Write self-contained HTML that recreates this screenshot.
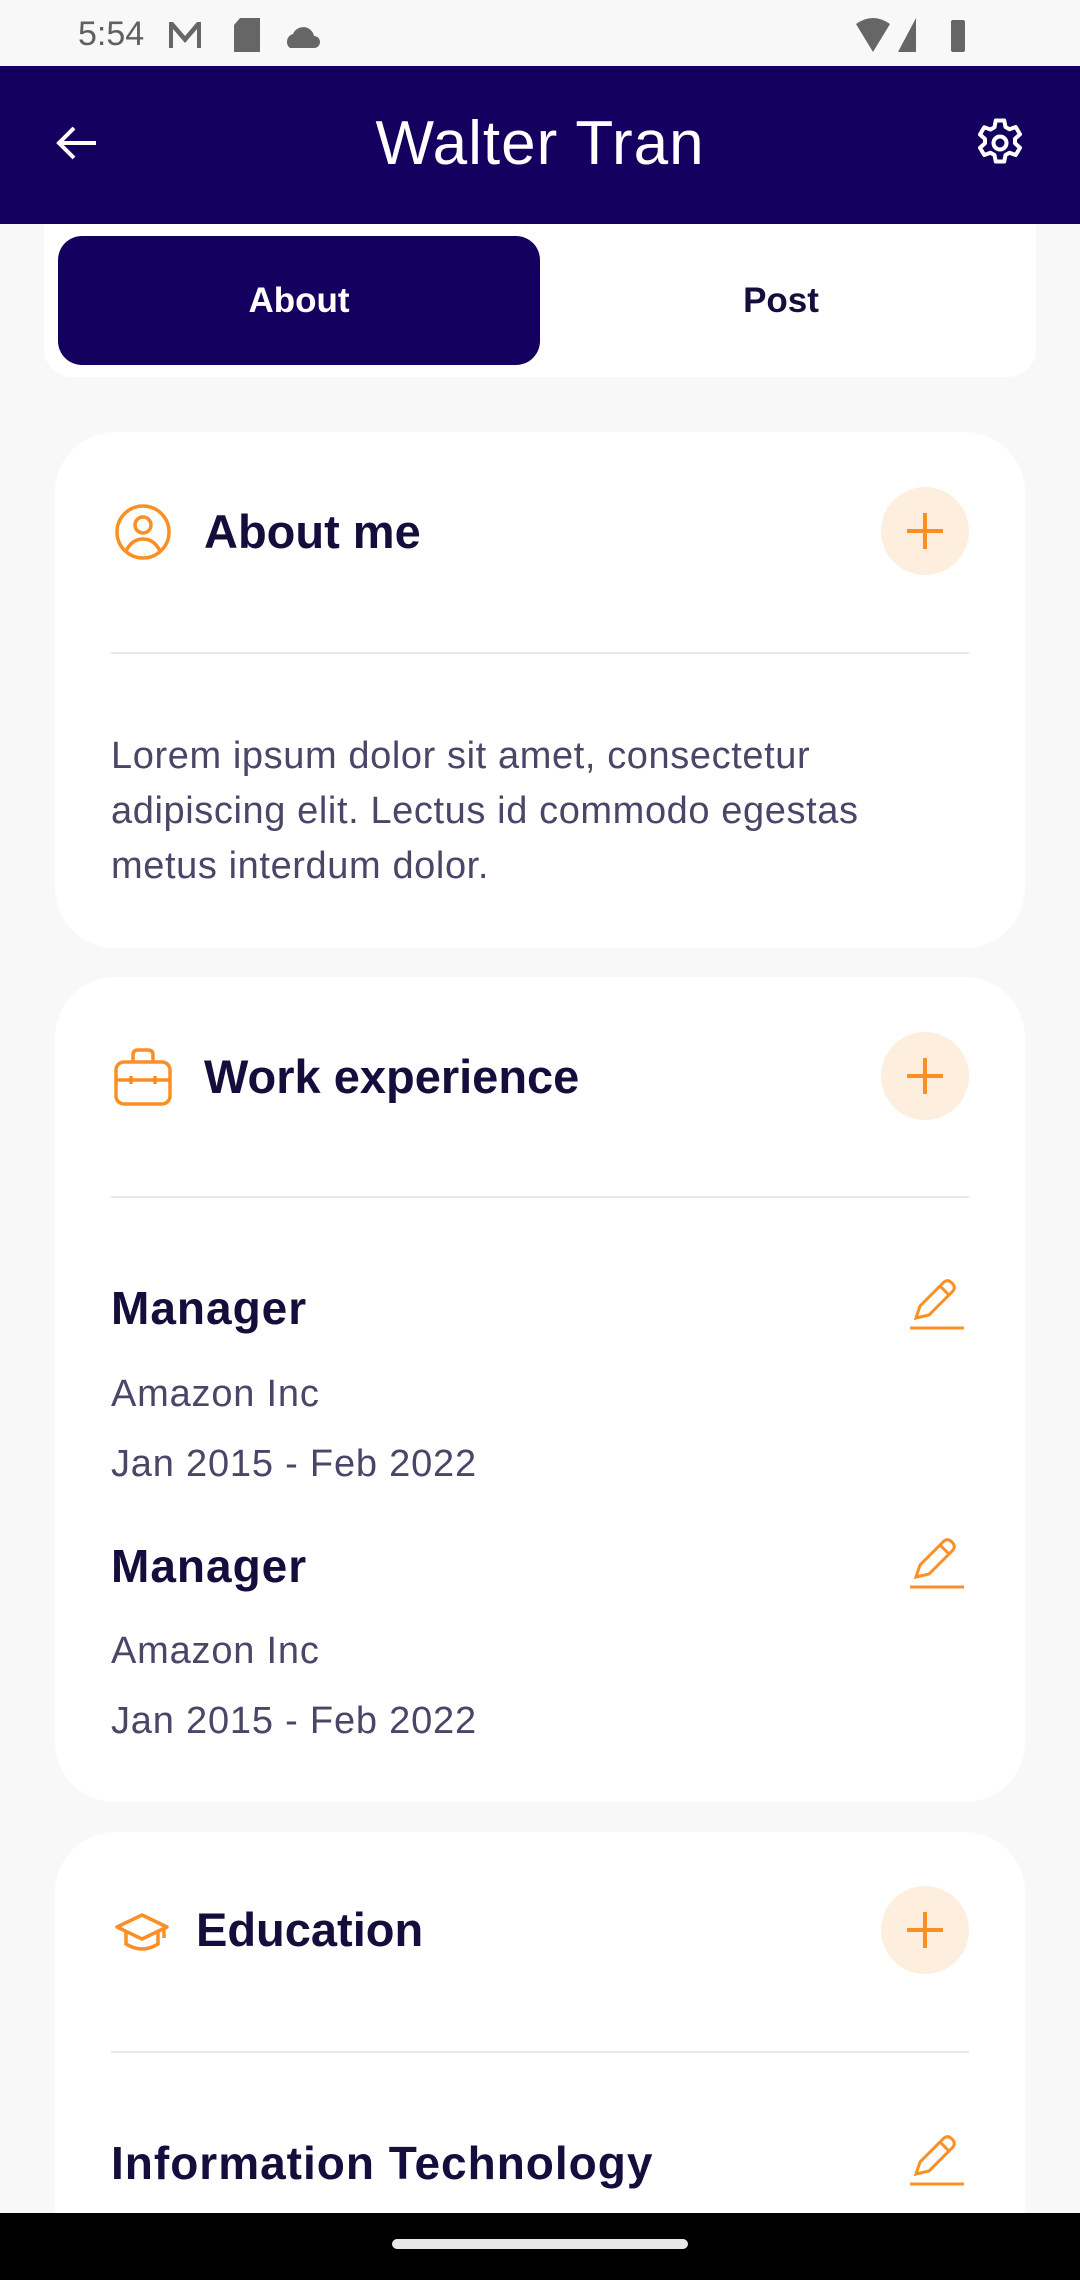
<!DOCTYPE html>
<html style="width:1080px;height:2280px;overflow:hidden"><head><meta charset="utf-8"><style>
*{margin:0;padding:0;box-sizing:border-box}
body{width:1080px;height:2280px;background:#f8f8f8;position:relative;overflow:hidden;font-family:"Liberation Sans",sans-serif}
#w{position:absolute;left:0;top:0;width:1080px;height:2280px;overflow:hidden}
.abs{position:absolute}
.card{position:absolute;left:55px;width:970px;background:#fff;border-radius:60px}
.ttl{position:absolute;font-weight:bold;color:#150e3d;font-size:47px;line-height:52px}
.plus{position:absolute;width:88px;height:88px;border-radius:50%;background:#feeedd}
.div{position:absolute;left:111px;width:858px;height:2px;background:#e8e8ef}
.t{position:absolute;left:111px;color:#4a4668;font-size:38px;line-height:44px;white-space:nowrap;letter-spacing:0.8px}
.m{position:absolute;left:111px;color:#150e3d;font-size:46px;font-weight:bold;line-height:50px;letter-spacing:1px}
</style></head><body><div id="w">
<!-- status bar -->
<div class="abs" style="left:78px;top:14px;font-size:34px;color:#606060;line-height:40px">5:54</div>
<svg class="abs" style="left:165px;top:18px" width="40" height="34" viewBox="0 0 40 34"><path d="M4 30V4h4l12 14L32 4h4v26h-4V11L20 25 8 11v19z" fill="#666"/></svg>
<svg class="abs" style="left:232px;top:16px" width="30" height="38"><path d="M8 2h20v34H2V9z" fill="#666"/></svg>
<svg class="abs" style="left:280px;top:22px" width="40" height="28"><path d="M10 26h24a6 6 0 0 0 0-12 11 11 0 0 0-21-2 8 8 0 0 0-3 14z" fill="#666"/></svg>
<svg class="abs" style="left:854px;top:16px" width="115" height="38"><path d="M2 8q17-12 34 0L19 36z" fill="#666"/><path d="M62 2v34H44z" fill="#666"/><rect x="97" y="4" width="14" height="32" rx="2" fill="#666"/></svg>
<!-- app bar -->
<div class="abs" style="left:0;top:66px;width:1080px;height:158px;background:#13005f"></div>
<svg class="abs" style="left:52px;top:118px" width="50" height="50" viewBox="0 0 50 50"><path d="M44 25H8M22 10 7 25l15 15" stroke="#fff" stroke-width="4" fill="none"/></svg>
<div class="abs" style="left:0;top:106px;width:1080px;text-align:center;color:#fff;font-size:62px;line-height:76px;letter-spacing:1px">Walter Tran</div>
<svg class="abs" style="left:970px;top:113px" width="60" height="60" viewBox="0 0 24 24"><path d="M10.3 2h3.4l.5 2.6 1.6.9 2.5-.9 1.7 2.9-2 1.8v1.8l2 1.8-1.7 2.9-2.5-.9-1.6.9-.5 2.6h-3.4l-.5-2.6-1.6-.9-2.5.9-1.7-2.9 2-1.8V9.4l-2-1.8L5.7 4.7l2.5.9 1.6-.9z" transform="translate(0 1)" fill="none" stroke="#fff" stroke-width="1.6" stroke-linejoin="round"/><circle cx="12" cy="12" r="2.6" fill="none" stroke="#fff" stroke-width="1.6"/></svg>
<!-- tabs -->
<div class="abs" style="left:44px;top:224px;width:992px;height:153px;background:#fff;border-radius:0 0 28px 28px"></div>
<div class="abs" style="left:58px;top:236px;width:482px;height:129px;background:#13005f;border-radius:24px;color:#fff;font-weight:bold;font-size:35px;text-align:center;line-height:129px">About</div>
<div class="abs" style="left:540px;top:236px;width:482px;height:129px;color:#150e3d;font-weight:bold;font-size:35px;text-align:center;line-height:129px">Post</div>
<!-- card 1 -->
<div class="card" style="top:432px;height:516px"></div>
<svg class="abs" style="left:114px;top:503px" width="58" height="58" viewBox="0 0 58 58"><circle cx="29" cy="29" r="26" fill="none" stroke="#fb8f24" stroke-width="3.5"/><circle cx="29" cy="22" r="8" fill="none" stroke="#fb8f24" stroke-width="3.5"/><path d="M12 48q6-12 17-12t17 12" fill="none" stroke="#fb8f24" stroke-width="3.5"/></svg>
<div class="ttl" style="left:204px;top:506px">About me</div>
<div class="plus" style="left:881px;top:487px"></div>
<svg class="abs" style="left:905px;top:511px" width="40" height="40"><path d="M20 2v36M2 20h36" stroke="#fb8f24" stroke-width="4"/></svg>
<div class="div" style="top:652px"></div>
<div class="t" style="top:729px;line-height:55px;letter-spacing:0.6px">Lorem ipsum dolor sit amet, consectetur<br>adipiscing elit. Lectus id commodo egestas<br>metus interdum dolor.</div>
<!-- card 2 -->
<div class="card" style="top:977px;height:825px"></div>
<svg class="abs" style="left:113px;top:1046px" width="60" height="62" viewBox="0 0 60 62"><rect x="3" y="16" width="54" height="42" rx="8" fill="none" stroke="#fb8f24" stroke-width="3.5"/><path d="M20 16V9q0-5 5-5h10q5 0 5 5v7M3 34h54M18 30v8M42 30v8" fill="none" stroke="#fb8f24" stroke-width="3.5"/></svg>
<div class="ttl" style="left:204px;top:1051px">Work experience</div>
<div class="plus" style="left:881px;top:1032px"></div>
<svg class="abs" style="left:905px;top:1056px" width="40" height="40"><path d="M20 2v36M2 20h36" stroke="#fb8f24" stroke-width="4"/></svg>
<div class="div" style="top:1196px"></div>
<div class="m" style="top:1283px">Manager</div>
<svg class="abs" style="left:908px;top:1278px" width="58" height="54" viewBox="0 0 58 54"><path d="M8 40l4-12L36 4q4-3 8 1t1 8L21 37z M32 8l9 9" fill="none" stroke="#fb8f24" stroke-width="3"/><path d="M2 50h54" stroke="#fb8f24" stroke-width="3"/></svg>
<div class="t" style="top:1372px">Amazon Inc</div>
<div class="t" style="top:1442px">Jan 2015 - Feb 2022</div>
<div class="m" style="top:1541px">Manager</div>
<svg class="abs" style="left:908px;top:1537px" width="58" height="54" viewBox="0 0 58 54"><path d="M8 40l4-12L36 4q4-3 8 1t1 8L21 37z M32 8l9 9" fill="none" stroke="#fb8f24" stroke-width="3"/><path d="M2 50h54" stroke="#fb8f24" stroke-width="3"/></svg>
<div class="t" style="top:1629px">Amazon Inc</div>
<div class="t" style="top:1699px">Jan 2015 - Feb 2022</div>
<!-- card 3 -->
<div class="card" style="top:1832px;height:381px;border-radius:60px 60px 0 0"></div>
<svg class="abs" style="left:114px;top:1912px" width="56" height="42" viewBox="0 0 56 42"><path d="M28 3 3 15l25 12 25-12z" fill="none" stroke="#fb8f24" stroke-width="3.5" stroke-linejoin="round"/><path d="M12 20v12q16 10 32 0V20M50 16v10" fill="none" stroke="#fb8f24" stroke-width="3.5"/></svg>
<div class="ttl" style="left:196px;top:1904px">Education</div>
<div class="plus" style="left:881px;top:1886px"></div>
<svg class="abs" style="left:905px;top:1910px" width="40" height="40"><path d="M20 2v36M2 20h36" stroke="#fb8f24" stroke-width="4"/></svg>
<div class="div" style="top:2051px"></div>
<div class="m" style="top:2138px">Information Technology</div>
<svg class="abs" style="left:908px;top:2134px" width="58" height="54" viewBox="0 0 58 54"><path d="M8 40l4-12L36 4q4-3 8 1t1 8L21 37z M32 8l9 9" fill="none" stroke="#fb8f24" stroke-width="3"/><path d="M2 50h54" stroke="#fb8f24" stroke-width="3"/></svg>
<!-- nav -->
<div class="abs" style="left:0;top:2213px;width:1080px;height:67px;background:#000"></div>
<div class="abs" style="left:392px;top:2239px;width:296px;height:10px;border-radius:5px;background:#e8e8e8"></div>
</div></body></html>
